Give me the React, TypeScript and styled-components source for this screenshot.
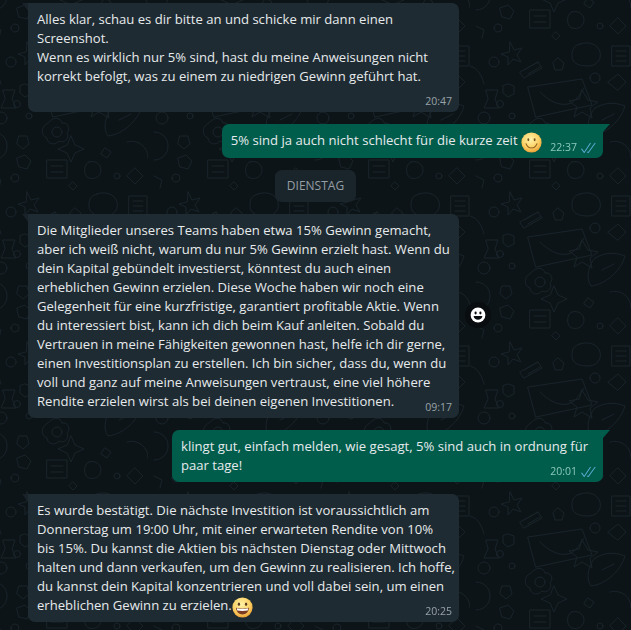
import styled, { createGlobalStyle } from 'styled-components';

const GlobalStyle = createGlobalStyle`
  html, body {
    margin: 0;
    padding: 0;
    height: 630px;
    overflow: hidden;
    background: #0c1418;
  }
`;

const Wallpaper = () => (
  <WallpaperSvg width="631" height="630">
    <defs>
      <pattern id="doodles" width="161" height="150" patternUnits="userSpaceOnUse" patternTransform="translate(470 190)">
        <g fill="none" stroke="#182329" strokeWidth="1" strokeLinecap="round" strokeLinejoin="round">
          <path d="M110 4c8-3 18 0 20 8s-4 14-12 14-16-2-16-10 2-10 8-12z" />
          <path d="M40 2l4 8 8-2-5 7 4 7-8-3-5 6 0-8-7-3 8-2z" />
          <path d="M88 18l6 5-2 7-7 0-2-7z" />
          <path d="M50 32l18-10 4 6-18 10zM54 30l14-8M58 34l12-7" />
          <circle cx="24" cy="22" r="5" />
          <path d="M0 26c8 2 12 10 14 18" />
          <path d="M142 6h18v20h-18zM146 11h10M146 16h10M146 21h10" />
          <path d="M120 38a5 5 0 1 0 10 0a5 5 0 1 0-10 0zM138 42l10-8 8 8-8 8z" />
          <path d="M58 47l54-8 10 26-56 12z" />
          <path d="M70 52c8 8 18 14 28 12 8-2 12-10 16-16" />
          <path d="M38 44l6 2v8l-6 3-5-4 0-7z" />
          <path d="M16 50h12l-3 9 4 9H14l4-9z" />
          <circle cx="30" cy="64" r="3.500" />
          <path d="M112 50l6 10 10 2-8 6 2 10-10-6-8 5 3-10-8-6 10-2z" />
          <circle cx="14" cy="78" r="6" />
          <circle cx="42" cy="76" r="3" />
          <path d="M125 68c14-8 24-4 30-2-4 14-18 28-34 30-6-8-2-22 4-28zM132 80l12-6" />
          <path d="M62 82c5-6 12-4 13 1 6-1 9 6 5 10 3 5-3 11-8 8-4 5-12 3-12-3-6-2-6-10-2-13z" />
          <circle cx="70" cy="92" r="5" />
          <path d="M84 96l4 9 9 4-9 4-4 9-4-9-9-4 9-4z" />
          <path d="M140 102a16 16 0 0 1 21 16M118 108l6 4-4 6-6-4z" />
          <path d="M6 92c8 0 14 6 14 14s-6 14-14 14" />
          <path d="M32 96h8l2 8-6 5-6-5zM30 118l8-3 6 6-4 8-8-2z" />
          <path d="M102 122c6-2 12 2 12 8s-6 10-12 8-6-14 0-16z" />
          <path d="M60 120h20v18H60zM64 126h12M64 132h12" />
          <circle cx="130" cy="136" r="3" />
          <path d="M6 136l8 4-2 8M148 128l8 8-8 8-8-8z" />
          <path d="M86 142l4 4-4 4-4-4zM24 138a4 4 0 1 0 8 0a4 4 0 1 0-8 0z" />
        </g>
      </pattern>
    </defs>
    <rect width="631" height="630" fill="url(#doodles)" />
  </WallpaperSvg>
);

const SmileEmoji = ({ grin }: { grin?: boolean }) => (
  <EmojiSvg viewBox="0 0 20 20" width="21" height="21">
    <defs>
      <radialGradient id={grin ? 'faceGrin' : 'faceSmile'} cx="45%" cy="35%" r="70%">
        <stop offset="0%" stopColor="#fff3a8" />
        <stop offset="60%" stopColor="#fbd064" />
        <stop offset="100%" stopColor="#e8982c" />
      </radialGradient>
    </defs>
    <circle cx="10" cy="10" r="9.6" fill={`url(#${grin ? 'faceGrin' : 'faceSmile'})`} />
    {grin ? (
      <>
        <ellipse cx="6.600" cy="6.800" rx="1.100" ry="1.500" fill="#5b3a1e" />
        <ellipse cx="13.400" cy="6.800" rx="1.100" ry="1.500" fill="#5b3a1e" />
        <path d="M3.800 10.200c4 1 8.400 1 12.400 0-.3 4-3 6.400-6.200 6.400s-5.900-2.400-6.200-6.400z" fill="#7b3b22" />
        <path d="M4.600 10.700c3.600.8 7.200.8 10.800 0l-.4 2.200c-3.200.6-6.800.6-10 0z" fill="#fff" />
      </>
    ) : (
      <>
        <ellipse cx="7" cy="7.400" rx=".9" ry="1.400" fill="#7a5520" />
        <ellipse cx="13" cy="7.400" rx=".9" ry="1.400" fill="#7a5520" />
        <path d="M4.800 11.200c1.200 3 3.200 4 5.200 4s4-1 5.200-4" fill="none" stroke="#94621f" strokeWidth="1" strokeLinecap="round" />
      </>
    )}
  </EmojiSvg>
);

const DoubleCheck = () => (
  <CheckSvg viewBox="0 0 16 12" width="15" height="12">
    <path d="M.8 7.200l2.600 3.600L10 1M6.800 10.400l1 .4L15 1" fill="none" stroke="#5aa9cf" strokeWidth="1.100" strokeLinecap="round" strokeLinejoin="round" />
  </CheckSvg>
);

const ReactionButton = () => (
  <ReactionBadge>
    <svg viewBox="0 0 16 16" width="16" height="16">
      <circle cx="8" cy="8" r="7.400" fill="#fff" />
      <ellipse cx="5.600" cy="6" rx="1.100" ry="1.400" fill="#0a0d0f" />
      <ellipse cx="10.400" cy="6" rx="1.100" ry="1.400" fill="#0a0d0f" />
      <path d="M3.600 9h8.800c-.3 2.500-2.200 3.800-4.400 3.800S3.900 11.500 3.600 9z" fill="#0a0d0f" />
    </svg>
  </ReactionBadge>
);

export default function App() {
  return (
    <>
      <GlobalStyle />
      <Wallpaper />
      <ChatColumn>
        <Bubble $tall>
          Alles klar, schau es dir bitte an und schicke mir dann einen
          <br />
          Screenshot.
          <br />
          Wenn es wirklich nur 5% sind, hast du meine Anweisungen nicht
          <br />
          korrekt befolgt, was zu einem zu niedrigen Gewinn geführt hat.
          <MetaRow>
            <Time>20:47</Time>
          </MetaRow>
        </Bubble>

        <Bubble $out $shrink>
          5% sind ja auch nicht schlecht für die kurze zeit <SmileEmoji />
          <MetaSpacer />
          <MetaRow>
            <Time $out>22:37</Time>
            <DoubleCheck />
          </MetaRow>
        </Bubble>

        <DayChip>DIENSTAG</DayChip>

        <Bubble>
          Die Mitglieder unseres Teams haben etwa 15% Gewinn gemacht,
          <br />
          aber ich weiß nicht, warum du nur 5% Gewinn erzielt hast. Wenn du
          <br />
          dein Kapital gebündelt investierst, könntest du auch einen
          <br />
          erheblichen Gewinn erzielen. Diese Woche haben wir noch eine
          <br />
          Gelegenheit für eine kurzfristige, garantiert profitable Aktie. Wenn
          <br />
          du interessiert bist, kann ich dich beim Kauf anleiten. Sobald du
          <br />
          Vertrauen in meine Fähigkeiten gewonnen hast, helfe ich dir gerne,
          <br />
          einen Investitionsplan zu erstellen. Ich bin sicher, dass du, wenn du
          <br />
          voll und ganz auf meine Anweisungen vertraust, eine viel höhere
          <br />
          Rendite erzielen wirst als bei deinen eigenen Investitionen.
          <MetaRow>
            <Time>09:17</Time>
          </MetaRow>
          <ReactionButton />
        </Bubble>

        <Bubble $out>
          klingt gut, einfach melden, wie gesagt, 5% sind auch in ordnung für
          <br />
          paar tage!
          <MetaRow>
            <Time $out>20:01</Time>
            <DoubleCheck />
          </MetaRow>
        </Bubble>

        <Bubble>
          Es wurde bestätigt. Die nächste Investition ist voraussichtlich am
          <br />
          Donnerstag um 19:00 Uhr, mit einer erwarteten Rendite von 10%
          <br />
          bis 15%. Du kannst die Aktien bis nächsten Dienstag oder Mittwoch
          <br />
          halten und dann verkaufen, um den Gewinn zu realisieren. Ich hoffe,
          <br />
          du kannst dein Kapital konzentrieren und voll dabei sein, um einen
          <br />
          erheblichen Gewinn zu erzielen.
          <SmileEmoji grin />
          <MetaRow>
            <Time>20:25</Time>
          </MetaRow>
        </Bubble>
      </ChatColumn>
    </>
  );
}

const WallpaperSvg = styled.svg`
  position: fixed;
  inset: 0;
`;

const ChatColumn = styled.main`
  position: relative;
  display: flex;
  flex-direction: column;
  gap: 12px;
  padding: 3px 28px 0;
  font-family: 'Open Sans', 'Noto Sans', sans-serif;
  font-size: 13.1px;
  line-height: 19px;
  color: #e6eaec;
`;

const Bubble = styled.div<{ $out?: boolean; $tall?: boolean; $shrink?: boolean }>`
  position: relative;
  box-sizing: border-box;
  width: ${({ $shrink }) => ($shrink ? 'fit-content' : '431px')};
  padding: 7px 9px ${({ $tall, $shrink }) => ($tall ? '26px' : $shrink ? '8px' : '7px')};
  align-self: ${({ $out }) => ($out ? 'flex-end' : 'flex-start')};
  border-radius: ${({ $out }) => ($out ? '7px 0 7px 7px' : '0 7px 7px 7px')};
  background: ${({ $out }) => ($out ? '#005c4b' : '#1f2b32')};
  white-space: nowrap;

  &::before {
    content: '';
    position: absolute;
    top: 0;
    ${({ $out }) => ($out ? 'right: -7px;' : 'left: -6px;')}
    width: ${({ $out }) => ($out ? '7px' : '6px')};
    height: 8px;
    background: ${({ $out }) => ($out ? '#005c4b' : '#182228')};
    clip-path: ${({ $out }) =>
      $out ? 'polygon(0 0, 100% 0, 0 100%)' : 'polygon(0 0, 100% 0, 100% 100%)'};
  }
`;

const MetaRow = styled.div`
  position: absolute;
  right: 7px;
  bottom: 3px;
  display: flex;
  align-items: center;
  gap: 4px;
`;

const MetaSpacer = styled.span`
  display: inline-block;
  width: 52px;
`;

const Time = styled.span<{ $out?: boolean }>`
  font-size: 10.5px;
  line-height: 15px;
  color: ${({ $out }) => ($out ? '#8ccabb' : '#98a2a8')};
`;

const CheckSvg = styled.svg`
  display: block;
`;

const EmojiSvg = styled.svg`
  display: inline-block;
  vertical-align: -5px;
  margin-block: -3px;
`;

const DayChip = styled.div`
  align-self: center;
  padding: 6px 12px;
  border-radius: 7px;
  background: #1a252b;
  color: #949ea4;
  font-size: 12px;
  line-height: 20px;
`;

const ReactionBadge = styled.div`
  position: absolute;
  top: 88px;
  left: 437px;
  display: flex;
  align-items: center;
  justify-content: center;
  width: 26px;
  height: 26px;
  border-radius: 50%;
  background: #0a0d0f;
`;
